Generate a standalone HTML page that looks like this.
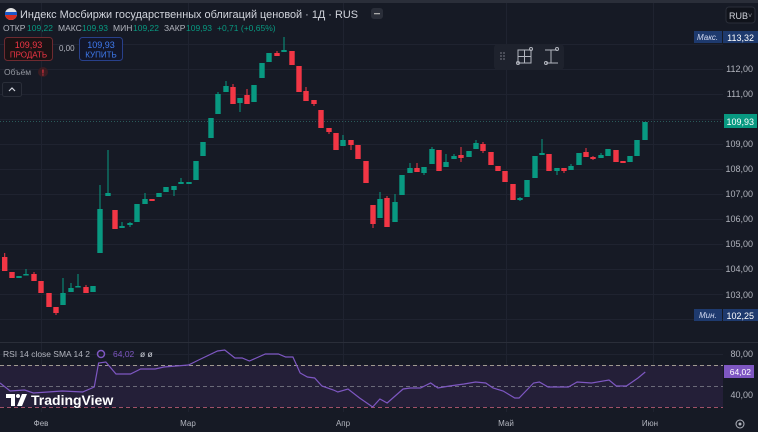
<!DOCTYPE html>
<html><head><meta charset="utf-8"><style>
html,body{margin:0;padding:0;background:#161a25;width:758px;height:432px;overflow:hidden;font-family:"Liberation Sans",sans-serif}
svg{position:absolute;left:0;top:0}
.t{font-family:"Liberation Sans",sans-serif}
</style></head><body>
<svg id="s" width="758" height="432" xmlns="http://www.w3.org/2000/svg">
<rect width="758" height="432" fill="#161a25"/>
<rect width="758" height="3" fill="#2a2e39"/>
<g id="grid" stroke="#1f2330" stroke-width="1"></g>
<line x1="0" y1="121.5" x2="723" y2="121.5" stroke="#2a5a5a" stroke-dasharray="1,2"/>
<g id="candles"></g>
<line x1="0" y1="342.5" x2="758" y2="342.5" stroke="#2a2e39"/>
<rect x="0" y="365" width="723" height="42" fill="#241f38"/>
<line x1="0" y1="365.5" x2="723" y2="365.5" stroke="#a09a90" stroke-dasharray="4,3"/>
<line x1="0" y1="386.5" x2="723" y2="386.5" stroke="#6a6a78" stroke-dasharray="4,3"/>
<line x1="0" y1="407.5" x2="723" y2="407.5" stroke="#a05068" stroke-dasharray="4,3"/>
<g transform="scale(1.45,1)">
<polyline fill="none" stroke="#7e57c2" stroke-width="1.2" vector-effect="non-scaling-stroke" points="0,383 7,391 17,390 23,393 33,392 43,391 57,392 65,387 68,363 73,362 80,374 90,374 97,369 107,369 113,367 130,365 137,360 150,351 155,350 162,358 167,358 172,361 183,354 192,354 197,357 202,357 207,373 212,377 217,378 222,386 230,390 233,392 240,389 248,398 257,407 262,399 267,403 278,389 283,388 290,388 297,383 302,388 310,386 320,384 328,382 335,383 340,388 347,391 355,398 358,398 368,383 372,382 378,387 392,387 398,382 408,383 420,380 425,386 432,386 440,378 445,372"/>
</g>
<g class="t" font-size="9" fill="#b2b5be" text-anchor="end">
<text x="753" y="72">112,00</text><text x="753" y="97">111,00</text>
<text x="753" y="147">109,00</text><text x="753" y="172">108,00</text><text x="753" y="197">107,00</text>
<text x="753" y="222">106,00</text><text x="753" y="247">105,00</text><text x="753" y="272">104,00</text>
<text x="753" y="298">103,00</text><text x="753" y="357">80,00</text><text x="753" y="398">40,00</text>
</g>
<rect x="694" y="31" width="28" height="12" fill="#1e3a6e"/><text x="697" y="40" class="t" font-size="8" fill="#d0d8f0" font-style="italic">Макс.</text>
<rect x="723" y="31" width="35" height="12" fill="#1e3a6e"/><text x="754" y="41" class="t" font-size="9" fill="#fff" text-anchor="end">113,32</text>
<rect x="694" y="309" width="28" height="12" fill="#1e3a6e"/><text x="699" y="318" class="t" font-size="8" fill="#d0d8f0" font-style="italic">Мин.</text>
<rect x="723" y="309" width="35" height="12" fill="#1e3a6e"/><text x="754" y="319" class="t" font-size="9" fill="#fff" text-anchor="end">102,25</text>
<rect x="724" y="114" width="33" height="14" fill="#089981"/><text x="754" y="125" class="t" font-size="9" fill="#fff" text-anchor="end">109,93</text>
<rect x="724" y="365" width="30" height="13" fill="#7e57c2"/><text x="751" y="375" class="t" font-size="8.5" fill="#fff" text-anchor="end">64,02</text>
<g class="t" font-size="8" fill="#b2b5be" text-anchor="middle">
<text x="41" y="426">Фев</text><text x="188" y="426">Мар</text><text x="343" y="426">Апр</text><text x="506" y="426">Май</text><text x="650" y="426">Июн</text>
</g>
<circle cx="740" cy="424" r="4" fill="none" stroke="#b2b5be"/><circle cx="740" cy="424" r="1.5" fill="#b2b5be"/>
<rect x="726" y="7" width="29" height="16" rx="3" fill="#10131b" stroke="#2a2e39"/>
<text x="729" y="19" class="t" font-size="9" fill="#d1d4dc">RUB</text><text x="748" y="18" class="t" font-size="7" fill="#9598a1">˅</text>
<circle cx="11" cy="14" r="6" fill="#e0e0e0"/><path d="M5 14 h12 a6 6 0 0 1 -12 0z" fill="#d52b1e"/><rect x="5" y="12" width="12" height="3" fill="#1c57c7"/>
<text x="20" y="18" class="t" font-size="11" fill="#d1d4dc" textLength="338" lengthAdjust="spacingAndGlyphs">Индекс Мосбиржи государственных облигаций ценовой · 1Д · RUS</text>
<rect x="371" y="8" width="12" height="11" rx="3" fill="#2a2e39"/><rect x="374" y="13" width="6" height="1.3" fill="#aaa"/>
<g class="t" font-size="8.5">
<text x="3" y="31" fill="#b2b5be">ОТКР</text><text x="27" y="31" fill="#089981">109,22</text>
<text x="58" y="31" fill="#b2b5be">МАКС</text><text x="82" y="31" fill="#089981">109,93</text>
<text x="113" y="31" fill="#b2b5be">МИН</text><text x="133" y="31" fill="#089981">109,22</text>
<text x="164" y="31" fill="#b2b5be">ЗАКР</text><text x="186" y="31" fill="#089981">109,93</text>
<text x="217" y="31" fill="#089981">+0,71 (+0,65%)</text>
</g>
<rect x="4.5" y="37.5" width="48" height="23" rx="3" fill="#1a1214" stroke="#6e2a30"/>
<text x="28.5" y="48" class="t" font-size="9" fill="#f23645" text-anchor="middle">109,93</text>
<text x="28.5" y="57.5" class="t" font-size="8" fill="#f23645" text-anchor="middle">ПРОДАТЬ</text>
<text x="59" y="51" class="t" font-size="8" fill="#b2b5be">0,00</text>
<rect x="79.5" y="37.5" width="43" height="23" rx="3" fill="#12162a" stroke="#28408a"/>
<text x="101" y="48" class="t" font-size="9" fill="#3f7bf0" text-anchor="middle">109,93</text>
<text x="101" y="57.5" class="t" font-size="8" fill="#3f7bf0" text-anchor="middle">КУПИТЬ</text>
<text x="4" y="75" class="t" font-size="8.5" fill="#9598a1">Объём</text>
<circle cx="43" cy="72" r="5" fill="#3a1c22"/><text x="43" y="75.5" class="t" font-size="8" fill="#f23645" text-anchor="middle" font-weight="bold">!</text>
<rect x="2.5" y="82.5" width="19" height="14" rx="2" fill="#161a25" stroke="#2a2e39"/>
<path d="M9 91 l3 -3 l3 3" fill="none" stroke="#d1d4dc" stroke-width="1.2"/>
<rect x="494" y="44" width="70" height="26" rx="4" fill="#1e222d"/>
<g fill="#6a6d78"><circle cx="501" cy="53" r="0.9"/><circle cx="504" cy="53" r="0.9"/><circle cx="501" cy="56" r="0.9"/><circle cx="504" cy="56" r="0.9"/><circle cx="501" cy="59" r="0.9"/><circle cx="504" cy="59" r="0.9"/></g>
<g fill="none" stroke="#b2b5be" stroke-width="1"><rect x="518" y="50" width="13" height="13"/><line x1="524.5" y1="50" x2="524.5" y2="63"/><line x1="518" y1="56.5" x2="531" y2="56.5"/><circle cx="531" cy="49" r="1.5"/><circle cx="518" cy="63" r="1.5"/>
<line x1="545" y1="50" x2="557" y2="50"/><line x1="551" y1="50" x2="551" y2="63"/><line x1="546" y1="63" x2="558" y2="63"/><circle cx="557" cy="49" r="1.5"/><circle cx="546" cy="63" r="1.5"/></g>
<text x="3" y="357" class="t" font-size="8.5" fill="#b2b5be" textLength="87" lengthAdjust="spacingAndGlyphs">RSI 14 close SMA 14 2</text>
<circle cx="101" cy="354" r="3.5" fill="none" stroke="#7e57c2" stroke-width="1.5"/>
<text x="113" y="357" class="t" font-size="8.5" fill="#7e57c2">64,02</text>
<text x="140" y="357" class="t" font-size="8.5" fill="#d1d4dc">ø ø</text>
<path d="M6 394 h9 v12 h-4 v-8 h-5z" fill="#fff"/>
<circle cx="18" cy="396" r="2" fill="#fff"/>
<path d="M22 394 h5 l-5 12 h-5z" fill="#fff"/>
<text x="31" y="405" class="t" font-size="14" font-weight="bold" fill="#fff">TradingView</text>
</svg>
<script>
var s="http://www.w3.org/2000/svg";
var g=document.getElementById('grid');
[41,188,343,506,653].forEach(function(x){var l=document.createElementNS(s,'line');l.setAttribute('x1',x+.5);l.setAttribute('x2',x+.5);l.setAttribute('y1',3);l.setAttribute('y2',412);g.appendChild(l);});
[44,69,94,119,144,169,194,219,244,269,294,319,354,375,396].forEach(function(y){var l=document.createElementNS(s,'line');l.setAttribute('x1',0);l.setAttribute('x2',723);l.setAttribute('y1',y+.5);l.setAttribute('y2',y+.5);g.appendChild(l);});
var c=[[4.7,257,271,253,271,'r'],[12,272,278,272,278,'r'],[19,276,278,276,278,'g'],[26,274,275,269,275,'g'],[34,274,281,272,281,'r'],[41,281,293,281,293,'r'],[49,293,307,293,307,'r'],[56,307,313,307,315,'r'],[63,293,305,278,305,'g'],[71,288,292,283,292,'g'],[78,286,287,274,287,'g'],[86,287,293,285,293,'r'],[93,286,292,286,292,'g'],[100,209,253,185,253,'g'],[108,193,196,150,196,'g'],[115,210,229,210,229,'r'],[122,226,228,222,228,'g'],[130,223,225,222,227,'g'],[137,204,222,204,222,'g'],[145,199,204,193,204,'g'],[152,199,201,199,201,'r'],[159,193,197,193,197,'g'],[166,187,192,187,192,'g'],[174,186,190,186,196,'g'],[181,182,184,178,184,'g'],[189,182,184,182,184,'g'],[196,161,180,161,180,'g'],[203,142,156,142,156,'g'],[211,118,138,118,138,'g'],[218,94,114,92,114,'g'],[226,86,92,81,92,'g'],[233,87,104,84,104,'r'],[240,98,103,98,112,'g'],[247,95,104,89,104,'r'],[254,85,102,85,102,'g'],[262,63,78,63,78,'g'],[269,53,62,53,62,'g'],[277,53,56,51,56,'r'],[284,50,52,37,52,'g'],[292,51,65,51,65,'r'],[299,66,92,66,92,'r'],[306,91,101,87,101,'r'],[314,100,104,100,106,'r'],[321,110,128,110,128,'r'],[329,128,132,128,134,'r'],[336,133,150,133,150,'r'],[343,140,146,135,146,'g'],[351,140,145,140,150,'r'],[358,145,159,145,159,'r'],[366,161,183,161,183,'r'],[373,205,224,205,228,'r'],[380,199,218,192,218,'g'],[387,198,227,196,227,'r'],[395,202,222,194,222,'g'],[402,175,195,175,195,'g'],[410,168,173,163,173,'g'],[417,168,172,163,172,'r'],[424,167,173,167,175,'g'],[432,149,164,147,164,'g'],[439,150,171,150,171,'r'],[446,162,167,154,167,'g'],[454,156,159,154,159,'g'],[461,155,158,147,162,'r'],[469,151,157,151,157,'g'],[476,143,149,140,149,'g'],[483,144,151,142,153,'r'],[491,152,165,152,165,'r'],[498,166,171,166,171,'r'],[505,171,182,171,182,'r'],[513,184,200,184,200,'r'],[520,198,200,197,201,'g'],[527,180,197,180,197,'g'],[535,156,178,156,178,'g'],[542,153,155,139,155,'g'],[549,154,171,154,171,'r'],[557,168,171,168,175,'g'],[564,168,171,168,173,'r'],[571,166,170,164,170,'g'],[579,153,165,153,165,'g'],[586,152,157,148,157,'r'],[593,157,159,156,160,'r'],[601,155,158,153,158,'g'],[608,149,156,149,156,'g'],[616,150,162,150,162,'r'],[623,161,163,161,163,'r'],[630,156,162,156,162,'g'],[637,140,156,140,156,'g'],[645,122,140,122,140,'g']];
var cg=document.getElementById('candles');
c.forEach(function(d){var col=d[5]=='g'?'#089981':'#f23645';
var w=document.createElementNS(s,'line');w.setAttribute('x1',d[0]);w.setAttribute('x2',d[0]);w.setAttribute('y1',d[3]);w.setAttribute('y2',d[4]);w.setAttribute('stroke',col);cg.appendChild(w);
var r=document.createElementNS(s,'rect');r.setAttribute('x',d[0]-2.7);r.setAttribute('width',5.4);r.setAttribute('y',d[1]);r.setAttribute('height',Math.max(1.5,d[2]-d[1]));r.setAttribute('fill',col);cg.appendChild(r);});
</script>
</body></html>
